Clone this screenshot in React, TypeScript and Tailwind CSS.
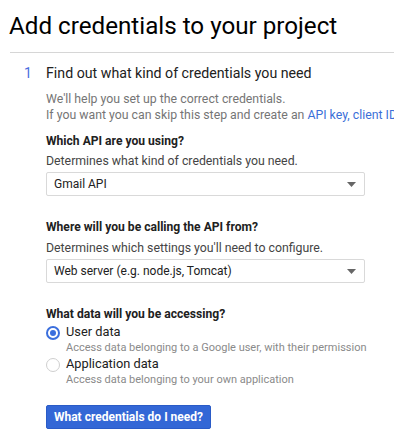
export default function App() {
  return (
    <div className="w-[394px] h-[441px] overflow-hidden bg-white text-[#212121] font-['Roboto',sans-serif]">
      {/* Title */}
      <h1 className="pl-[9px] pt-[12px] text-[24.2px] leading-[28px] text-black whitespace-nowrap">
        Add credentials to your project
      </h1>
      <div className="ml-[10px] mt-[12px] h-px bg-[#d6d6d6]" />

      {/* Step */}
      <div className="flex mt-[10px] pl-[24px]">
        <div className="w-[22px] shrink-0 text-[14px] leading-[20px] text-[#4a6ee0]">1</div>
        <div className="flex-1 whitespace-nowrap">
          <div className="text-[14.2px] leading-[20px] text-[#212121]">
            Find out what kind of credentials you need
          </div>

          <div className="mt-[8px] text-[12.3px] leading-[16px] text-[#757575]">
            <div>We'll help you set up the correct credentials.</div>
            <div>
              If you want you can skip this step and create an{" "}
              <span className="text-[#3b6fd8]">API key, client ID</span>
            </div>
          </div>

          {/* API */}
          <div className="mt-[10px] text-[12.1px] leading-[16px] font-bold text-[#212121]">
            Which API are you using?
          </div>
          <div className="mt-[3px] text-[12.3px] leading-[18px] text-[#444]">
            Determines what kind of credentials you need.
          </div>
          <Select value="Gmail API" />

          {/* Platform */}
          <div className="mt-[23px] text-[12.1px] leading-[16px] font-bold text-[#212121]">
            Where will you be calling the API from?
          </div>
          <div className="mt-[4px] text-[12.3px] leading-[18px] text-[#444]">
            Determines which settings you'll need to configure.
          </div>
          <Select value="Web server (e.g. node.js, Tomcat)" />

          {/* Data */}
          <div className="mt-[23px] text-[12.1px] leading-[16px] font-bold text-[#212121]">
            What data will you be accessing?
          </div>
          <div className="mt-[1px] flex flex-col">
            <Radio checked label="User data" hint="Access data belonging to a Google user, with their permission" />
            <Radio label="Application data" hint="Access data belonging to your own application" />
          </div>

          <button className="mt-[18px] w-[165px] h-[24px] rounded-[2px] bg-[#3367d6] border border-[#2a5bc7] text-white text-[12px] font-bold leading-[20px] text-center">
            What credentials do I need?
          </button>
        </div>
      </div>
    </div>
  );
}

function Select({ value }: { value: string }) {
  return (
    <div className="mt-[2px] w-[319px] h-[24px] flex items-center justify-between border border-[#d9d9d9] rounded-[2px] pl-[7px] pr-[8px] text-[12px] text-[#212121]">
      <span>{value}</span>
      <svg width="9" height="5" viewBox="0 0 9 5">
        <path d="M0 0h9L4.5 5z" fill="#666" />
      </svg>
    </div>
  );
}

function Radio({ checked, label, hint }: { checked?: boolean; label: string; hint: string }) {
  return (
    <div className="flex">
      <div className="w-[20px] shrink-0 pt-[3px]">
        {checked ? (
          <div className="w-[14px] h-[14px] rounded-full border-2 border-[#3b6fdd] flex items-center justify-center">
            <div className="w-[6px] h-[6px] rounded-full bg-[#3b6fdd]" />
          </div>
        ) : (
          <div className="w-[14px] h-[14px] rounded-full border border-[#cfcfcf]" />
        )}
      </div>
      <div>
        <div className="text-[12.8px] leading-[17px] text-[#212121]">{label}</div>
        <div className="text-[11px] leading-[15px] text-[#8a8a8a]">{hint}</div>
      </div>
    </div>
  );
}
